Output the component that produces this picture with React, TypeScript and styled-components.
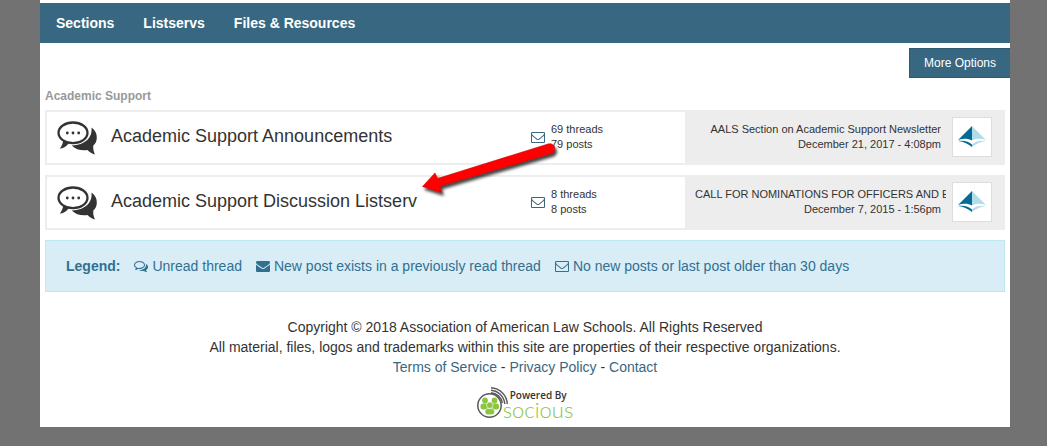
import React from "react";
import styled, { createGlobalStyle } from "styled-components";

const GlobalStyle = createGlobalStyle`
  *, *::before, *::after { box-sizing: border-box; }
  html { background: #727272; }
  body {
    margin: 0;
    font-family: "Liberation Sans", Arial, Helvetica, sans-serif;
    font-size: 14px;
    line-height: 20px;
    color: #333;
  }
  a { color: #386781; text-decoration: none; }
`;

const Page = styled.div`
  position: relative;
  margin: 0 37px 0 40px;
  padding: 3px 0 8px;
  background: #fff;
`;

const NavBar = styled.nav`
  display: flex;
  gap: 29px;
  padding: 10px 16px;
  background: #386781;
`;

const NavLink = styled.a`
  color: #fff;
  font-weight: bold;
`;

const Toolbar = styled.div`
  display: flex;
  justify-content: flex-end;
  padding-top: 5px;
`;

const OptionsButton = styled.button`
  height: 30px;
  padding: 0 14px;
  border: 1px solid #2d5a73;
  border-right-width: 0;
  background: #386781;
  color: #fff;
  font: inherit;
  font-size: 12px;
  cursor: pointer;
`;

const Main = styled.main`
  padding: 8px 5px 0;
`;

const GroupTitle = styled.h2`
  margin: 0 0 4px;
  font-size: 12px;
  line-height: 20px;
  color: #999;
`;

const ForumList = styled.ul`
  display: grid;
  gap: 10px;
  margin: 0;
  padding: 0;
  list-style: none;
`;

const ForumRow = styled.li`
  display: grid;
  grid-template-columns: minmax(0, 474fr) minmax(0, 164fr) minmax(0, 318fr);
  min-height: 55px;
  border: 2px solid #ededed;
`;

const TitleCell = styled.div`
  display: flex;
  align-items: center;
  gap: 14px;
  padding-left: 10px;
`;

const ForumLink = styled.a`
  color: #333;
  font-size: 18px;
  padding-bottom: 4px;
`;

const CountCell = styled.div`
  display: flex;
  align-items: center;
  gap: 6px;
  padding: 0 0 2px 10px;
  font-size: 11px;
  line-height: 15px;
  color: #333;
`;

const LatestCell = styled.div`
  display: flex;
  align-items: center;
  justify-content: flex-end;
  gap: 6px;
  padding: 0 11px 2px 10px;
  background: #ededed;
`;

const LatestText = styled.div`
  flex: 1;
  min-width: 0;
  overflow: hidden;
  font-size: 11px;
  line-height: 15px;
  text-align: right;
  white-space: nowrap;
`;

const LatestLine = styled.div`
  padding-right: 5px;
`;

const Avatar = styled.div`
  flex: none;
  display: grid;
  place-items: center;
  width: 40px;
  height: 40px;
  border: 1px solid #ddd;
  background: #fff;
`;

const Legend = styled.div`
  display: flex;
  flex-wrap: wrap;
  gap: 14px;
  margin-top: 10px;
  padding: 15px 20px;
  border: 1px solid #bce8f1;
  background: #d9edf7;
  color: #31708f;
`;

const LegendItem = styled.span`
  display: inline-flex;
  align-items: center;
  gap: 4px;
`;

const Footer = styled.footer`
  display: flex;
  flex-direction: column;
  align-items: center;
  padding-top: 25px;
  text-align: center;
`;

const Powered = styled.a`
  display: flex;
  align-items: flex-start;
  height: 32px;
  margin-top: 10px;
`;

const PoweredWords = styled.span`
  display: flex;
  flex-direction: column;
  align-items: flex-start;
  margin-left: -6px;
  padding-top: 3px;
`;

const PoweredBy = styled.span`
  padding-left: 7px;
  font: 600 10px/11px "Open Sans", sans-serif;
  color: #333;
`;

const Brand = styled.span`
  font: 300 22px/18px Lato, sans-serif;
  color: #8cc63f;
`;

const Pointer = styled.svg`
  position: absolute;
  top: 138px;
  left: 375px;
  pointer-events: none;
`;

const Glyph = styled.svg`
  flex: none;
  width: 14px;
  height: 14px;
  fill: currentColor;
`;

const CountGlyph = styled(Glyph)`
  color: #386781;
`;

const paths = {
  envelopeOpen:
    "M1664 1504v-768q-32 36-69 66-268 206-426 338-51 43-83 67t-86.5 48.5-102.5 24.5h-2q-48 0-102.5-24.5t-86.5-48.5-83-67q-158-132-426-338-37-30-69-66v768q0 13 9.5 22.5t22.5 9.5h1472q13 0 22.5-9.5t9.5-22.5zm0-1051v-24.5l-.5-13-3-12.5-5.5-9-9-7.5-14-2.5h-1472q-13 0-22.5 9.5t-9.5 22.5q0 168 147 284 193 152 401 317 6 5 35 29.5t46 37.5 44.5 31.5 50.5 27.5 43 9h2q20 0 43-9t50.5-27.5 44.5-31.5 46-37.5 35-29.5q208-165 401-317 54-43 100.5-115.5t46.5-131.5zm128-37v1088q0 66-47 113t-113 47h-1472q-66 0-113-47t-47-113v-1088q0-66 47-113t113-47h1472q66 0 113 47t47 113z",
  envelope:
    "M1792 710v794q0 66-47 113t-113 47h-1472q-66 0-113-47t-47-113v-794q44 49 101 87 362 246 497 345 57 42 92.5 65.5t94.5 48 110 24.5h2q51 0 110-24.5t94.5-48 92.5-65.5q170-123 498-345 57-39 100-87zm0-294q0 79-49 151t-122 123q-376 261-468 325-10 7-42.5 31t-54 38.5-52 32.5-57.5 27-50 9h-2q-23 0-50-9t-57.5-27-52-32.5-54-38.5-42.5-31q-91-64-262-182.5t-205-142.5q-62-42-117-115.5t-55-136.5q0-78 41.5-130t118.5-52h1472q65 0 112.5 47t47.5 113z",
  comments:
    "M704 384q-153 0-286 52t-211.5 141-78.5 191q0 82 53 158t149 132l97 56-35 84q34-20 62-39l44-31 53 10q78 14 153 14 153 0 286-52t211.5-141 78.5-191-78.5-191-211.5-141-286-52zm0-128q191 0 353.5 68.5t256.5 186.5 94 257-94 257-256.5 186.5-353.5 68.5q-86 0-176-16-124 88-278 128-36 9-86 16h-3q-11 0-20.5-8t-11.5-21q-1-3-1-6.5t.5-6.5 2-6l2.5-5 3.5-5.5 4-5 4.5-5 4-4.5q5-6 23-25t26-29.5 22.5-29 25-38.5 20.5-44q-124-72-195-177t-71-224q0-139 94-257t256.5-186.5 353.5-68.5zm822 1169q10 24 20.5 44t25 38.5 22.5 29 26 29.5 23 25q1 1 4 4.5t4.5 5 4 5 3.5 5.5l2.5 5 2 6 .5 6.5-1 6.5q-3 14-13 22t-22 7q-50-7-86-16-154-40-278-128-90 16-176 16-271 0-472-132 58 4 88 4 161 0 309-45t264-129q125-92 192-212t67-254q0-77-23-152 129 71 204 178t75 230q0 120-71 224.5t-195 176.5z",
};

const Bubbles = () => (
  <svg width="40" height="40" viewBox="0 0 40 40" aria-hidden="true">
    <path
      d="M34.4 9.5C38 12 40 15.5 39.8 20C39.7 23 38.5 25.500 36.300 27.500C36 30.500 36.500 33.500 38 36.500C35 35.700 32.500 34.200 30.500 32C24.500 33 18.500 31.300 14.700 27.400C27.500 27.500 36 19.500 34.400 9.500Z"
      fill="#333"
    />
    <path d="M6.5 21.5C6 25 5 27.6 2.8 30.8C7 30 10 28 12 24.8Z" fill="#333" />
    <ellipse cx="16" cy="14.8" rx="14.5" ry="10.3" fill="#fff" stroke="#333" strokeWidth="2.3" />
    <g fill="#333">
      <circle cx="10.3" cy="15" r="1.4" />
      <circle cx="16" cy="15" r="1.4" />
      <circle cx="21.7" cy="15" r="1.4" />
    </g>
  </svg>
);

const SchoolLogo = () => (
  <svg width="28" height="22" viewBox="0 0 28 22" aria-hidden="true">
    <path d="M14 0V14.5C10.5 12.6 5 12.200 0 14Z" fill="#056b94" />
    <path d="M14 0V14.5C17.5 12.6 23 12.200 28 14Z" fill="#b3dcea" />
    <path d="M0 15C6 14 11 15.5 14 18.5V21C10.500 18 6 15.800 0 15Z" fill="#056b94" />
    <path d="M28 15C22 14 17 15.5 14 18.5V21C17.500 18 22 15.800 28 15Z" fill="#b3dcea" />
  </svg>
);

const SociousMark = () => (
  <svg width="32" height="32" viewBox="0 0 32 32" aria-hidden="true">
    <g fill="none" stroke="#58595b">
      <circle cx="12.5" cy="18.500" r="11.700" strokeWidth="1.500" />
      <path d="M14 .8A17 17 0 0 1 30.300 17" strokeWidth="1.400" />
      <path d="M14 3.300A15 15 0 0 1 27.800 17" strokeWidth="1.400" />
      <path d="M14 5.700A12.500 12.500 0 0 1 25.400 16" strokeWidth="1.400" />
    </g>
    <g fill="#8cc63f">
      <circle cx="8" cy="13.500" r="2.900" />
      <circle cx="17.500" cy="13.500" r="2.900" />
      <rect x="3.500" y="16.500" width="8.500" height="6" rx="2.500" />
      <rect x="13.500" y="16.500" width="8.500" height="6" rx="2.500" />
      <circle cx="12.800" cy="18.200" r="3.300" stroke="#fff" strokeWidth=".6" />
      <rect x="8" y="21.600" width="9.600" height="6.200" rx="2.700" stroke="#fff" strokeWidth=".6" />
    </g>
  </svg>
);

type IconName = keyof typeof paths;

const Icon = ({ name }: { name: IconName }) => (
  <Glyph viewBox="0 0 1792 1792" aria-hidden="true">
    <path d={paths[name]} />
  </Glyph>
);

const forums = [
  {
    title: "Academic Support Announcements",
    threads: 69,
    posts: 79,
    latest: "AALS Section on Academic Support Newsletter",
    date: "December 21, 2017 - 4:08pm",
  },
  {
    title: "Academic Support Discussion Listserv",
    threads: 8,
    posts: 8,
    latest: "CALL FOR NOMINATIONS FOR OFFICERS AND EX",
    date: "December 7, 2015 - 1:56pm",
  },
];

const legend: { icon: IconName; label: string }[] = [
  { icon: "comments", label: "Unread thread" },
  { icon: "envelope", label: "New post exists in a previously read thread" },
  { icon: "envelopeOpen", label: "No new posts or last post older than 30 days" },
];

export default function App() {
  return (
    <>
      <GlobalStyle />
      <Page>
        <NavBar>
          <NavLink href="#sections">Sections</NavLink>
          <NavLink href="#listservs">Listservs</NavLink>
          <NavLink href="#files">Files &amp; Resources</NavLink>
        </NavBar>
        <Toolbar>
          <OptionsButton type="button">More Options</OptionsButton>
        </Toolbar>
        <Main>
          <GroupTitle>Academic Support</GroupTitle>
          <ForumList>
            {forums.map((forum) => (
              <ForumRow key={forum.title}>
                <TitleCell>
                  <Bubbles />
                  <ForumLink href="#forum">{forum.title}</ForumLink>
                </TitleCell>
                <CountCell>
                  <CountGlyph viewBox="0 0 1792 1792" aria-hidden="true">
                    <path d={paths.envelopeOpen} />
                  </CountGlyph>
                  <div>
                    <div>{forum.threads} threads</div>
                    <div>{forum.posts} posts</div>
                  </div>
                </CountCell>
                <LatestCell>
                  <LatestText>
                    <LatestLine>{forum.latest}</LatestLine>
                    <LatestLine>{forum.date}</LatestLine>
                  </LatestText>
                  <Avatar>
                    <SchoolLogo />
                  </Avatar>
                </LatestCell>
              </ForumRow>
            ))}
          </ForumList>
          <Legend>
            <strong>Legend:</strong>
            {legend.map((item) => (
              <LegendItem key={item.label}>
                <Icon name={item.icon} />
                {item.label}
              </LegendItem>
            ))}
          </Legend>
        </Main>
        <Footer>
          <div>Copyright © 2018 Association of American Law Schools. All Rights Reserved</div>
          <div>
            All material, files, logos and trademarks within this site are properties of their
            respective organizations.
          </div>
          <div>
            <a href="#terms">Terms of Service</a> - <a href="#privacy">Privacy Policy</a> -{" "}
            <a href="#contact">Contact</a>
          </div>
          <Powered href="#socious">
            <SociousMark />
            <PoweredWords>
              <PoweredBy>Powered By</PoweredBy>
              <Brand>socious</Brand>
            </PoweredWords>
          </Powered>
        </Footer>
        <Pointer width="150" height="66" viewBox="415 138 150 66" aria-hidden="true">
          <defs>
            <filter id="shade" x="-10%" y="-20%" width="120%" height="150%">
              <feDropShadow dx="2" dy="3" stdDeviation="1.5" floodColor="#000" floodOpacity=".75" />
            </filter>
          </defs>
          <path
            d="M422.5 186.500L435 173L437.500 178.500L548 144C555 142 557.500 151.500 551 153.500L440 186L441.500 192.500Z"
            fill="#fe0000"
            stroke="#c00"
            strokeWidth=".6"
            filter="url(#shade)"
          />
        </Pointer>
      </Page>
    </>
  );
}
